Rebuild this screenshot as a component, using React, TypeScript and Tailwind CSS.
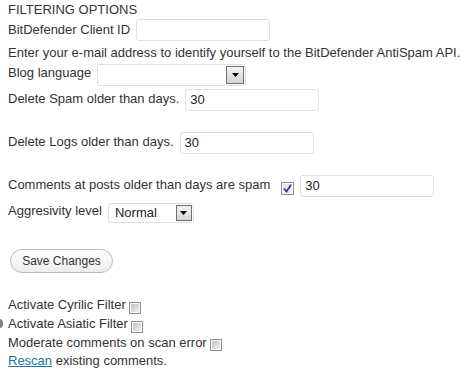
import React from "react";

function TextInput({ value = "", className = "" }: { value?: string; className?: string }) {
  return (
    <div
      className={
        "w-[134px] h-[22px] border border-[#dfdfdf] rounded-[3px] bg-white flex items-center pl-[4px] text-[13px] text-[#222] leading-[16px] " +
        className
      }
    >
      {value}
    </div>
  );
}

function Arrow({ size = 18 }: { size?: number }) {
  return (
    <div
      className="border border-[#707070] bg-gradient-to-b from-[#f4f4f4] to-[#d4d4d4] flex items-center justify-center"
      style={{ width: size, height: size }}
    >
      <svg width="7" height="4" viewBox="0 0 7 4">
        <path d="M0 0 H7 L3.5 4 Z" fill="#000" />
      </svg>
    </div>
  );
}

function Select({
  value = "",
  className = "",
  arrow = 18,
}: {
  value?: string;
  className?: string;
  arrow?: number;
}) {
  return (
    <div
      className={
        "border border-[#dfdfdf] rounded-[3px] bg-white flex items-center justify-between pl-[6px] pr-[1px] text-[13px] text-[#222] leading-[16px] " +
        className
      }
    >
      <span>{value}</span>
      <Arrow size={arrow} />
    </div>
  );
}

function CheckBox({ checked = false, className = "" }: { checked?: boolean; className?: string }) {
  if (checked) {
    return (
      <div
        className={
          "w-[13px] h-[13px] border border-[#8f8f8f] bg-white p-[1px] " + className
        }
      >
        <div className="w-full h-full bg-gradient-to-br from-[#d9dde6] to-[#f2f4f8] flex items-center justify-center">
          <svg width="9" height="9" viewBox="0 0 9 9">
            <path d="M1 4.5 L3.5 7.5 L8 0.8" stroke="#2a3d96" strokeWidth="1.8" fill="none" />
          </svg>
        </div>
      </div>
    );
  }
  return (
    <div className={"w-[12px] h-[12px] border border-[#8e8e8e] bg-white p-[1px] " + className}>
      <div className="w-full h-full bg-gradient-to-br from-[#c4c4c4] to-[#efefef]" />
    </div>
  );
}

export default function App() {
  return (
    <div className="relative w-[461px] h-[370px] bg-white pl-[8px] text-[13px] text-[#333] font-['Liberation_Sans',Arial,sans-serif] overflow-hidden">
      <div className="pt-[2px] leading-[16px]">FILTERING OPTIONS</div>

      <div className="mt-[1px] flex items-start h-[22px]">
        <span className="mt-[3px] leading-[16px]">BitDefender Client ID</span>
        <TextInput className="ml-[6px]" />
      </div>

      <div className="mt-[4px] leading-[16px] whitespace-nowrap">
        Enter your e-mail address to identify yourself to the BitDefender AntiSpam API.
      </div>

      <div className="mt-[3px] flex items-start h-[22px]">
        <span className="mt-[1px] leading-[16px]">Blog language</span>
        <Select className="ml-[6px] w-[149px] h-[22px]" arrow={18} />
      </div>

      <div className="mt-[3px] flex items-start h-[22px]">
        <span className="mt-[2px] leading-[16px]">Delete Spam older than days.</span>
        <TextInput value="30" className="ml-[6px]" />
      </div>

      <div className="mt-[21px] flex items-start h-[22px]">
        <span className="mt-[2px] leading-[16px]">Delete Logs older than days.</span>
        <TextInput value="30" className="ml-[6px]" />
      </div>

      <div className="mt-[21px] flex items-start h-[22px]">
        <span className="mt-[2px] leading-[16px]">Comments at posts older than days are spam</span>
        <CheckBox checked className="ml-[11px] mt-[7px]" />
        <TextInput value="30" className="ml-[6px]" />
      </div>

      <div className="mt-[6px] flex items-start h-[20px]">
        <span className="leading-[16px]">Aggresivity level</span>
        <Select value="Normal" className="ml-[6px] w-[86px] h-[20px]" arrow={16} />
      </div>

      <button className="mt-[26px] ml-[2px] w-[103px] h-[24px] rounded-full border border-[#bbbbbb] bg-gradient-to-b from-white to-[#ececec] text-[12px] text-[#333] leading-[16px] flex items-center justify-center">
        Save Changes
      </button>

      <div className="mt-[22px] flex items-start h-[19px]">
        <span className="leading-[19px]">Activate Cyrilic Filter</span>
        <CheckBox className="ml-[3px] mt-[7px]" />
      </div>
      <div className="flex items-start h-[19px]">
        <span className="leading-[19px]">Activate Asiatic Filter</span>
        <CheckBox className="ml-[3px] mt-[7px]" />
      </div>
      <div className="flex items-start h-[19px]">
        <span className="leading-[19px]">Moderate comments on scan error</span>
        <CheckBox className="ml-[3px] mt-[6px]" />
      </div>
      <div className="h-[18px] leading-[18px]">
        <a href="#" className="text-[#21759b] underline">
          Rescan
        </a>{" "}
        existing comments.
      </div>

      <div className="absolute left-[-5px] top-[319px] w-[8px] h-[9px] rounded-full bg-[#808080]" />
    </div>
  );
}
